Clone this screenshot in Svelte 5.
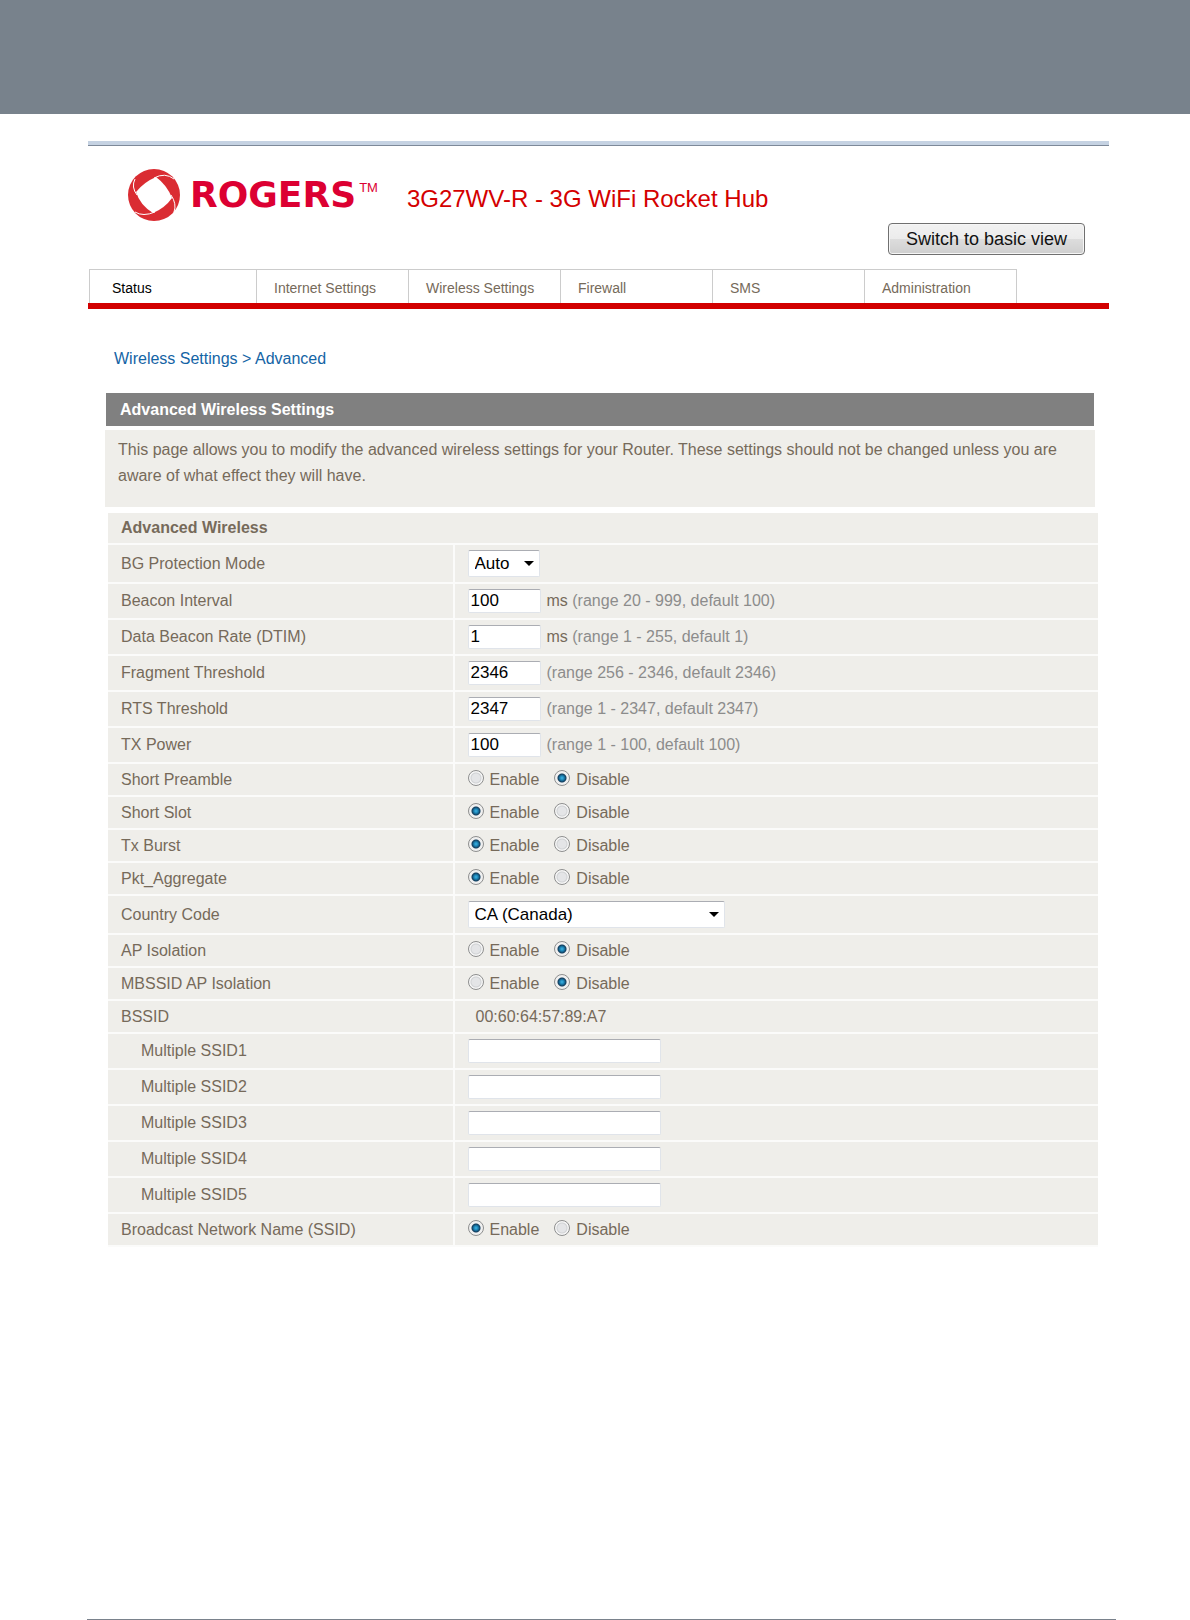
<script>
  const tabs = [
    'Status',
    'Internet Settings',
    'Wireless Settings',
    'Firewall',
    'SMS',
    'Administration'
  ];

  let activeTab = $state('Status');

  // One entry per table row, in display order
  let rows = $state([
    { id: 'bg-protection', label: 'BG Protection Mode', type: 'select', value: 'Auto', options: ['Auto', 'On', 'Off'] },
    { id: 'beacon', label: 'Beacon Interval', type: 'number', value: '100', unit: 'ms', hint: '(range 20 - 999, default 100)' },
    { id: 'dtim', label: 'Data Beacon Rate (DTIM)', type: 'number', value: '1', unit: 'ms', hint: '(range 1 - 255, default 1)' },
    { id: 'fragment', label: 'Fragment Threshold', type: 'number', value: '2346', hint: '(range 256 - 2346, default 2346)' },
    { id: 'rts', label: 'RTS Threshold', type: 'number', value: '2347', hint: '(range 1 - 2347, default 2347)' },
    { id: 'tx-power', label: 'TX Power', type: 'number', value: '100', hint: '(range 1 - 100, default 100)' },
    { id: 'short-preamble', label: 'Short Preamble', type: 'toggle', value: 'Disable' },
    { id: 'short-slot', label: 'Short Slot', type: 'toggle', value: 'Enable' },
    { id: 'tx-burst', label: 'Tx Burst', type: 'toggle', value: 'Enable' },
    { id: 'pkt-aggregate', label: 'Pkt_Aggregate', type: 'toggle', value: 'Enable' },
    { id: 'country', label: 'Country Code', type: 'select', wide: true, value: 'CA (Canada)', options: ['CA (Canada)', 'US (United States)'] },
    { id: 'ap-isolation', label: 'AP Isolation', type: 'toggle', value: 'Disable' },
    { id: 'mbssid-isolation', label: 'MBSSID AP Isolation', type: 'toggle', value: 'Disable' },
    { id: 'bssid', label: 'BSSID', type: 'static', value: '00:60:64:57:89:A7' },
    { id: 'ssid1', label: 'Multiple SSID1', type: 'text', value: '' },
    { id: 'ssid2', label: 'Multiple SSID2', type: 'text', value: '' },
    { id: 'ssid3', label: 'Multiple SSID3', type: 'text', value: '' },
    { id: 'ssid4', label: 'Multiple SSID4', type: 'text', value: '' },
    { id: 'ssid5', label: 'Multiple SSID5', type: 'text', value: '' },
    { id: 'broadcast', label: 'Broadcast Network Name (SSID)', type: 'toggle', value: 'Enable' }
  ]);
</script>

<div class="page">
  <div class="band"></div>

  <div class="frame">
    <header class="header">
      <div class="brand">
        <svg class="logo" viewBox="0 0 52 52" aria-hidden="true">
          <circle cx="26" cy="26" r="26" fill="#da2c32" />
          <path d="M8 23 Q16 13 28 8 Q39 16 44 29 Q37 39 25 44 Q12 36 8 23Z" fill="#fff" />
          <path d="M9 26 Q3 18 7 10 M26 9 Q37 3 46 10 M43 26 Q49 35 46 43 M27 43 Q15 48 7 43" fill="none" stroke="#fff" stroke-width="1" />
        </svg>
        <span class="wordmark">ROGERS</span>
        <span class="tm">TM</span>
        <h1>3G27WV-R - 3G WiFi Rocket Hub</h1>
      </div>
      <button class="switch-view" type="button">Switch to basic view</button>
    </header>

    <nav class="tabs">
      {#each tabs as tab}
        <a href="#{tab}" class:active={tab === activeTab} onclick={() => (activeTab = tab)}>{tab}</a>
      {/each}
    </nav>

    <main>
      <p class="breadcrumb"><a href="#wireless">Wireless Settings</a> &gt; <a href="#advanced">Advanced</a></p>

      <h2>Advanced Wireless Settings</h2>
      <p class="intro">
        This page allows you to modify the advanced wireless settings for your Router. These settings should not be changed unless you are aware of what effect they will have.
      </p>

      <table>
        <colgroup>
          <col class="name-col" />
          <col />
        </colgroup>
        <thead>
          <tr><th colspan="2">Advanced Wireless</th></tr>
        </thead>
        <tbody>
          {#each rows as row (row.id)}
            <tr class={row.type}>
              <td class="name">
                {#if row.type === 'toggle' || row.type === 'static'}
                  <span id="{row.id}-label">{row.label}</span>
                {:else}
                  <label for={row.id}>{row.label}</label>
                {/if}
              </td>
              <td>
                {#if row.type === 'select'}
                  <select id={row.id} class:wide={row.wide} bind:value={row.value}>
                    {#each row.options as option}
                      <option>{option}</option>
                    {/each}
                  </select>
                {:else if row.type === 'number'}
                  <div class="field">
                    <input id={row.id} class="short" type="text" bind:value={row.value} />
                    <span>{#if row.unit}{row.unit}{' '}{/if}<span class="hint">{row.hint}</span></span>
                  </div>
                {:else if row.type === 'toggle'}
                  <div class="radios" role="radiogroup" aria-labelledby="{row.id}-label">
                    {#each ['Enable', 'Disable'] as choice}
                      <label>
                        <input type="radio" name={row.id} value={choice} bind:group={row.value} />
                        {choice}
                      </label>
                    {/each}
                  </div>
                {:else if row.type === 'text'}
                  <input id={row.id} class="long" type="text" bind:value={row.value} />
                {:else}
                  <span class="static-value">{row.value}</span>
                {/if}
              </td>
            </tr>
          {/each}
        </tbody>
      </table>
    </main>
  </div>

  <footer></footer>
</div>

<style>
  :global(body) {
    margin: 0;
    background: #fff;
  }

  .page {
    display: flex;
    flex-direction: column;
    min-height: 100vh;
    font-family: 'Liberation Sans', Arial, sans-serif;
    font-size: 16px;
    line-height: 20px;
    color: #766a5a;
  }

  .page * {
    box-sizing: border-box;
  }

  .band {
    height: 114px;
    background: #78828c;
  }

  .frame {
    margin: 27px 81px 0 88px;
    border-top: 4px solid #c5d2e2;
  }

  .header {
    display: flex;
    flex-direction: column;
    gap: 1px;
    height: 124px;
    padding: 22px 24px 0 40px;
    border-top: 1px solid #7d8999;
  }

  .brand {
    display: flex;
    align-items: center;
    height: 54px;
  }

  .logo {
    width: 52px;
    height: 52px;
  }

  .wordmark {
    margin-left: 10px;
    font-family: 'DejaVu Sans', sans-serif;
    font-size: 36px;
    font-weight: 700;
    line-height: 52px;
    color: #dc0032;
  }

  .tm {
    align-self: flex-start;
    margin: 10px 0 0 3px;
    font-size: 13px;
    color: #dc0032;
  }

  h1 {
    margin: 8px 0 0 29px;
    font-size: 24px;
    font-weight: 400;
    line-height: 28px;
    color: #d40000;
  }

  .switch-view {
    align-self: flex-end;
    height: 32px;
    padding: 0 17px;
    border: 1px solid #707070;
    border-radius: 4px;
    box-shadow: inset 0 0 0 1px #f6f6f6;
    background: linear-gradient(#f2f2f2, #ebebeb 50%, #dddddd 50%, #cfcfcf);
    font-family: inherit;
    font-size: 18px;
    color: #111;
  }

  .tabs {
    display: flex;
    height: 40px;
    padding-left: 1px;
    border-bottom: 6px solid #d20000;
    font-size: 14px;
    line-height: 36px;
  }

  .tabs a {
    width: 152px;
    padding-left: 17px;
    border-top: 1px solid #ccc;
    border-right: 1px solid #ccc;
    color: #766a5a;
    text-decoration: none;
  }

  .tabs a:first-child {
    width: 168px;
    padding-left: 22px;
    border-left: 1px solid #ccc;
  }

  .tabs a.active {
    color: #000;
  }

  main {
    padding: 40px 11px 0 20px;
  }

  .breadcrumb {
    margin: 0 0 24px 6px;
    color: #1464a5;
  }

  .breadcrumb a {
    color: inherit;
    text-decoration: none;
  }

  h2 {
    margin: 0 4px 4px -2px;
    padding-left: 14px;
    background: #808080;
    font-size: 16px;
    line-height: 33px;
    color: #fff;
  }

  .intro {
    margin: 0 3px 6px -3px;
    padding: 7px 8px 18px 13px;
    background: #efeeea;
    line-height: 26px;
  }

  table {
    width: 100%;
    table-layout: fixed;
    border-collapse: separate;
    border-spacing: 0;
  }

  .name-col {
    width: 35%;
  }

  th,
  td {
    padding: 0 13px;
    border-bottom: 2px solid #fbfbfa;
    background: #efeeea;
    text-align: left;
  }

  th {
    height: 32px;
  }

  td {
    height: 36px;
  }

  .select td {
    height: 39px;
  }

  .toggle td,
  .static td {
    height: 33px;
  }

  .name {
    border-right: 2px solid #fbfbfa;
  }

  .text .name {
    padding-left: 33px;
  }

  input[type='text'],
  select {
    display: block;
    border: 1px solid #e0e4ea;
    border-top-color: #abadb3;
    border-radius: 2px;
    background-color: #fff;
    font-family: inherit;
    font-size: 17px;
    color: #000;
  }

  input[type='text'] {
    height: 24px;
    padding: 0 2px;
  }

  select {
    width: 72px;
    height: 27px;
    padding: 0 6px;
    appearance: none;
    background-image: url("data:image/svg+xml,%3Csvg xmlns='http://www.w3.org/2000/svg' width='10' height='5'%3E%3Cpath d='M0 0h10L5 5z'/%3E%3C/svg%3E");
    background-repeat: no-repeat;
    background-position: right 5px center;
  }

  select.wide {
    width: 257px;
  }

  input.short {
    width: 73px;
  }

  input.long {
    width: 193px;
  }

  .field {
    display: flex;
    align-items: center;
    gap: 6px;
  }

  .hint {
    color: #8c8c8c;
  }

  .radios {
    display: flex;
    gap: 15px;
  }

  .radios label {
    display: flex;
    gap: 6px;
  }

  input[type='radio'] {
    appearance: none;
    width: 16px;
    height: 16px;
    margin: 0;
    border: 1px solid #8e8f8f;
    border-radius: 50%;
    background: radial-gradient(circle, #e4e5e7 0 4px, #d0d2d4 5px, #f6f6f6 6px);
  }

  input[type='radio']:checked {
    background: radial-gradient(circle, #3fb4e4 0, #1c86b8 2px, #123c5c 4px, #f0f0f0 5px);
  }

  .static-value {
    padding-left: 8px;
  }

  footer {
    margin: auto 74px 0 87px;
    border-top: 1px solid #7a828c;
  }
</style>
